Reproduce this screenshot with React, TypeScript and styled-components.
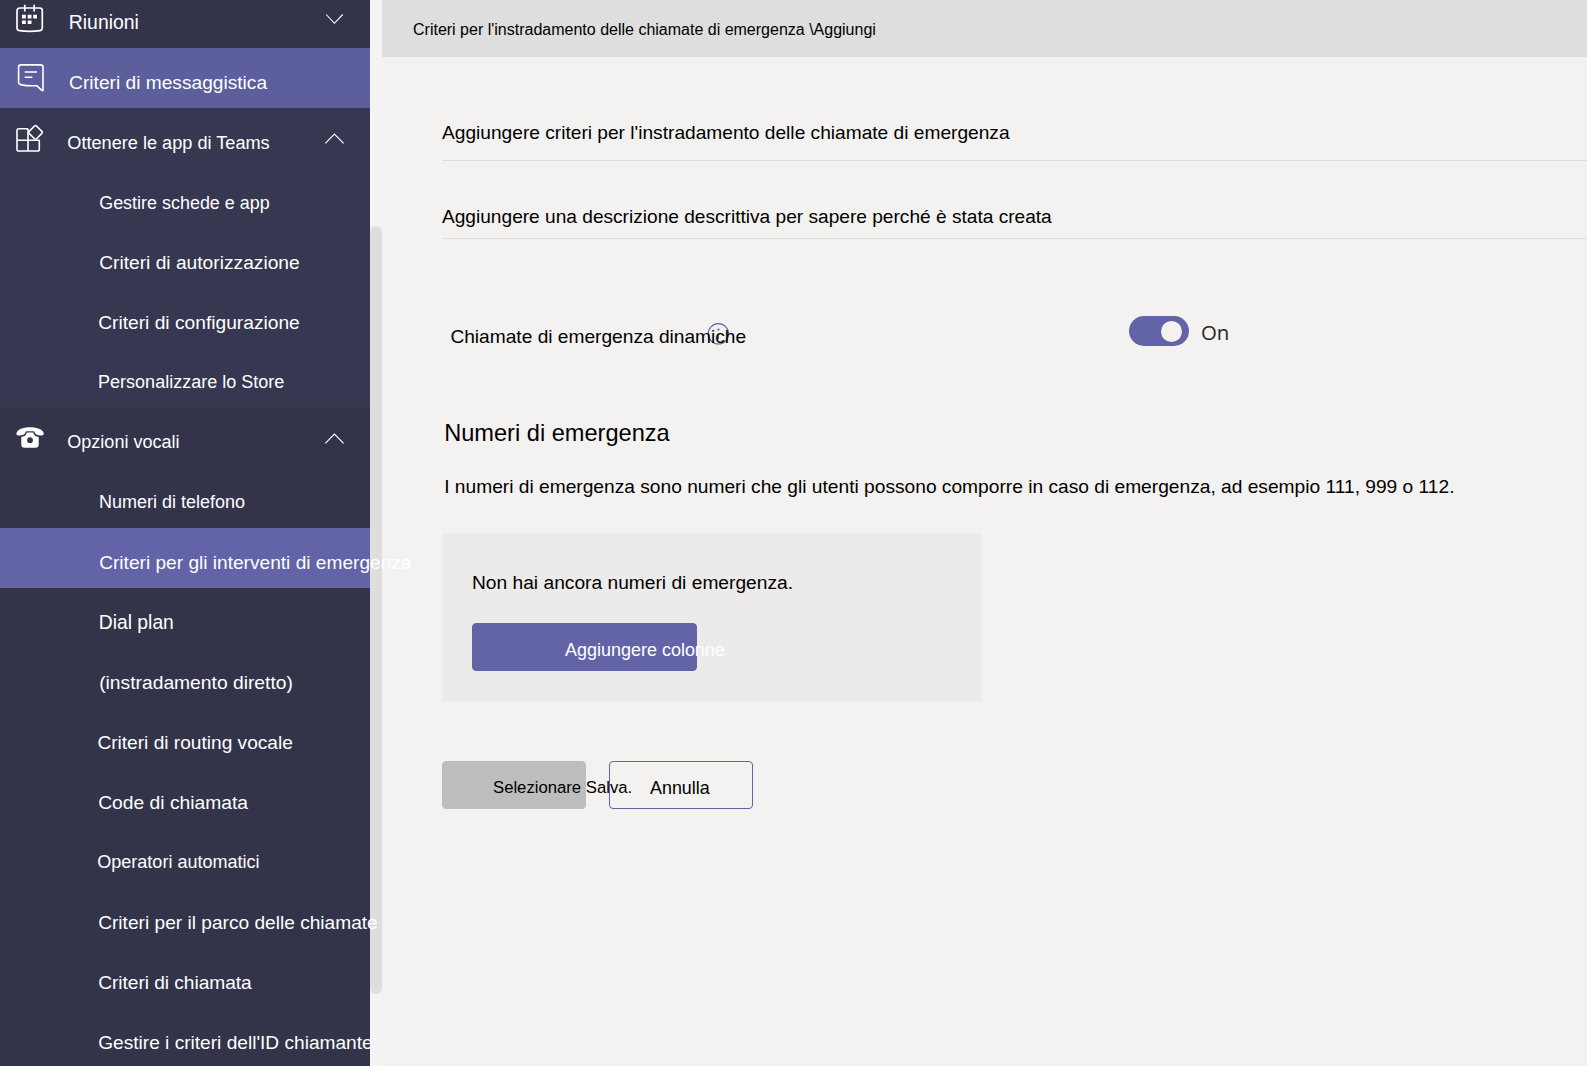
import React from "react";
import styled, { createGlobalStyle } from "styled-components";

const GlobalStyle = createGlobalStyle`
  * { box-sizing: border-box; }
  html, body { margin: 0; height: 100%; overflow: hidden; }
  body {
    background: #f3f2f0;
    font-family: "Liberation Sans", Arial, sans-serif;
    color: #000;
  }
`;

const Page = styled.div`
  display: flex;
  height: 1066px;
  overflow: hidden;
`;

const Label = styled.span<{ $size: number; $tracking?: number }>`
  display: block;
  flex: none;
  white-space: nowrap;
  font-size: ${(p) => p.$size}px;
  line-height: ${(p) => Math.round(p.$size * 0.905) + Math.round(p.$size * 0.212)}px;
  letter-spacing: ${(p) => p.$tracking ?? 0}px;
`;

/* ---- sidebar ---- */

const Sidebar = styled.nav`
  position: relative;
  z-index: 1;
  flex: none;
  width: 370px;
  margin-top: -12px;
  color: #fff;
`;

const tones = {
  base: "#33344a",
  group: "#363751",
  hover: "#5d5e9c",
  selected: "#6264a7",
};

const NavRow = styled.div<{ $tone: keyof typeof tones }>`
  display: flex;
  align-items: flex-start;
  height: 60px;
  background: ${(p) => tones[p.$tone]};
`;

const IconSlot = styled.div`
  flex: none;
  width: 60px;
  height: 60px;
  svg { display: block; }
`;

const NavText = styled.div<{ $indent: number; $base: number; $size: number }>`
  flex: 1;
  min-width: 0;
  padding-left: ${(p) => p.$indent}px;
  padding-top: ${(p) => p.$base - Math.round(p.$size * 0.905)}px;
`;

const ChevronSlot = styled.div`
  flex: none;
  width: 20px;
  margin: 23px 26px 0 0;
  svg { display: block; }
`;

const ScrollTrack = styled.div`
  flex: none;
  width: 12px;
  padding-top: 226px;
  background: #f4f4f4;
`;

const ScrollThumb = styled.div`
  height: 768px;
  border-radius: 6px;
  background: #dedede;
`;

/* ---- main area ---- */

const Main = styled.main`
  flex: 1;
  min-width: 0;
`;

const TopBar = styled.header`
  height: 57px;
  padding: 21px 0 0 31px;
  background: #dedede;
`;

const Form = styled.div`
  padding-left: 60px;
`;

const Field = styled.div<{ $height: number; $pad: number }>`
  height: ${(p) => p.$height}px;
  padding-top: ${(p) => p.$pad}px;
  border-bottom: 1px solid #dedede;
`;

const SettingRow = styled.div`
  display: flex;
  align-items: flex-start;
  height: 181px;
  padding-top: 77px;
`;

const SettingName = styled.div`
  position: relative;
  isolation: isolate;
  width: 687px;
  padding: 10px 0 0 8.4px;
`;

const InfoMark = styled.svg`
  position: absolute;
  z-index: -1;
  left: 265px;
  top: 6px;
`;

const Toggle = styled.div`
  display: flex;
  justify-content: flex-end;
  align-items: center;
  width: 60px;
  height: 30px;
  padding-right: 7px;
  border-radius: 15px;
  background: #6264a7;
`;

const Knob = styled.div`
  width: 21px;
  height: 21px;
  border-radius: 50%;
  background: #f3f2f1;
`;

const ToggleState = styled.span`
  margin: 1px 0 0 12px;
  font: 20.4px/30px "Open Sans", "Noto Sans", sans-serif;
  color: #252424;
`;

const Section = styled.section`
  padding-left: 2.2px;
  height: 113px;
`;

const Paragraph = styled.div`
  padding-top: 30px;
`;

const EmptyPanel = styled.div`
  width: 540px;
  height: 168px;
  padding: 39px 30px 30px;
  background: #ecebe9;
`;

const Actions = styled.div`
  display: flex;
  gap: 23px;
  margin-top: 60px;
`;

const Button = styled.button<{ $kind: "primary" | "disabled" | "outline"; $inset: number }>`
  display: flex;
  align-items: flex-start;
  flex: none;
  width: ${(p) => (p.$kind === "primary" ? 225 : 144)}px;
  height: 48px;
  margin: ${(p) => (p.$kind === "primary" ? "30px 0 0" : "0")};
  padding: 16px 0 0 ${(p) => p.$inset - 1}px;
  border: 1px solid ${(p) => (p.$kind === "disabled" ? "#bdbdbd" : "#6264a7")};
  border-radius: 4px;
  background: ${(p) => ({ primary: "#6264a7", disabled: "#bdbdbd", outline: "transparent" })[p.$kind]};
  color: ${(p) => (p.$kind === "primary" ? "#fff" : "#000")};
  font-family: inherit;
  text-align: left;
`;

/* ---- icons ---- */

const CalendarIcon = () => (
  <svg width="60" height="60" viewBox="0 -12 60 60" fill="none" stroke="#fff" strokeWidth="1.7">
    <path d="M20 8H39.8Q42.3 8 42.3 10.5V28Q42.3 30.2 40 30.6Q29.6 32.2 19.3 30.6Q17 30.2 17 28V11Q17 8 20 8Z" />
    <path d="M24.8 4.8V11.6M34.2 4.8V11.6" />
    <path
      d="M22 14.8h3.8v3.6H22zM27.7 14.8h3.8v3.6h-3.8zM33.2 14.8h3.8v3.6h-3.8zM22 20.4h3.8v3.6H22zM27.7 20.4h3.8v3.6h-3.8z"
      fill="#fff"
      stroke="none"
    />
  </svg>
);

const MessageIcon = () => (
  <svg width="60" height="60" viewBox="0 48 60 60" fill="none" stroke="#fff" strokeWidth="1.6" strokeLinejoin="round">
    <path d="M20.8 64.9H40.6Q43 64.9 43 67.2V90.6L41.8 90.3L36.7 85.7Q27.5 86.2 20.4 84.6Q18.6 84.2 18.6 82.2V67.2Q18.6 64.9 20.8 64.9Z" />
    <path d="M24.7 72H37M24.7 77.2H32.4" />
  </svg>
);

const AppsIcon = () => (
  <svg width="60" height="60" viewBox="0 108 60 60" fill="none" stroke="#fff" strokeWidth="1.6" strokeLinejoin="round">
    <path d="M28 128.8H18.8Q17 128.8 17 130.6V149.2Q17 151 18.8 151H37.6Q39.3 151 39.3 149.2V140.2H17M28 128.8V151" />
    <rect x="30.3" y="127.2" width="10.4" height="10.4" rx="1.4" transform="rotate(45 35.5 132.4)" />
  </svg>
);

const PhoneIcon = () => (
  <svg width="60" height="60" viewBox="0 408 60 60" fill="#fff">
    <path d="M16.4 433.8C16.8 429.6 22.8 427.3 30 427.3S43.4 429.6 43.8 433.8C43.8 435.2 42.6 435.6 41 435.5C37.6 435.3 35.3 434.6 34.6 432.2Q34.4 431.2 33.4 431.2H26.6Q25.7 431.2 25.5 432.2C24.8 434.6 22.5 435.3 19.2 435.5C17.5 435.6 16.3 435.2 16.4 433.8Z" />
    <path
      fillRule="evenodd"
      d="M27.3 432.6H32.7Q33.5 432.6 33.7 433.4C34.3 435.5 35.7 436.5 38.7 437V444.5Q38.7 447.8 35.5 447.8H24.5Q21.3 447.8 21.3 444.5V437C24.3 436.5 25.7 435.5 26.3 433.4Q26.5 432.6 27.3 432.6ZM30 437.3A2.9 2.9 0 1 0 30 443.1A2.9 2.9 0 1 0 30 437.3Z"
    />
  </svg>
);

const Chevron = ({ open }: { open: boolean }) => (
  <svg width="20" height="14" viewBox="0 0 20 14" fill="none" stroke="#fff" strokeWidth="1.1">
    <path d={open ? "M1.3 12.3L10.4 3L19.6 12.3" : "M2.2 3.5L10.4 12.3L18.7 3.5"} />
  </svg>
);

interface NavItem {
  text: string;
  tone: keyof typeof tones;
  size: number;
  indent: number;
  base?: number;
  tracking?: number;
  icon?: React.ReactNode;
  open?: boolean;
}

const navItems: NavItem[] = [
  { text: "Riunioni", tone: "base", size: 19.4, indent: 68.8, icon: <CalendarIcon />, open: false },
  { text: "Criteri di messaggistica", tone: "hover", size: 19.17, indent: 69.1, icon: <MessageIcon /> },
  { text: "Ottenere le app di Teams", tone: "group", size: 18.15, indent: 67.3, icon: <AppsIcon />, open: true },
  { text: "Gestire schede e app", tone: "group", size: 17.95, indent: 99.2 },
  { text: "Criteri di autorizzazione", tone: "group", size: 19.2, indent: 99.2 },
  { text: "Criteri di configurazione", tone: "group", size: 19.2, indent: 98.2 },
  { text: "Personalizzare lo Store", tone: "group", size: 18, indent: 98.1, base: 40 },
  { text: "Opzioni vocali", tone: "base", size: 18.04, indent: 67.3, base: 40, icon: <PhoneIcon />, open: true },
  { text: "Numeri di telefono", tone: "base", size: 18, indent: 99, base: 40 },
  { text: "Criteri per gli interventi di emergenza", tone: "selected", size: 19.12, indent: 99.2 },
  { text: "Dial plan", tone: "base", size: 19.3, indent: 98.8 },
  { text: "(instradamento diretto)", tone: "base", size: 19.25, indent: 99.2 },
  { text: "Criteri di routing vocale", tone: "base", size: 19.13, indent: 97.4 },
  { text: "Code di chiamata", tone: "base", size: 19.25, indent: 98.2 },
  { text: "Operatori automatici", tone: "base", size: 18.03, indent: 97.3, base: 40 },
  { text: "Criteri per il parco delle chiamate", tone: "base", size: 19.14, indent: 98.2 },
  { text: "Criteri di chiamata", tone: "base", size: 19.15, indent: 98.2, tracking: -0.04 },
  { text: "Gestire i criteri dell'ID chiamante", tone: "base", size: 19.12, indent: 98.2 },
];

export default function App() {
  return (
    <>
      <GlobalStyle />
      <Page>
        <Sidebar>
          {navItems.map((item) => (
            <NavRow key={item.text} $tone={item.tone}>
              {item.icon && <IconSlot>{item.icon}</IconSlot>}
              <NavText
                $indent={item.icon ? item.indent - 60 : item.indent}
                $base={item.base ?? 41}
                $size={item.size}
              >
                <Label $size={item.size} $tracking={item.tracking}>{item.text}</Label>
              </NavText>
              {item.open !== undefined && (
                <ChevronSlot>
                  <Chevron open={item.open} />
                </ChevronSlot>
              )}
            </NavRow>
          ))}
        </Sidebar>
        <ScrollTrack>
          <ScrollThumb />
        </ScrollTrack>
        <Main>
          <TopBar>
            <Label $size={16}>{"Criteri per l'instradamento delle chiamate di emergenza \\Aggiungi"}</Label>
          </TopBar>
          <Form>
            <Field $height={104} $pad={65}>
              <Label $size={19.15}>Aggiungere criteri per l'instradamento delle chiamate di emergenza</Label>
            </Field>
            <Field $height={78} $pad={45}>
              <Label $size={19.13}>Aggiungere una descrizione descrittiva per sapere perché è stata creata</Label>
            </Field>
            <SettingRow>
              <SettingName>
                <InfoMark width="24" height="24" viewBox="0 0 24 24" fill="none" stroke="#6264a7" strokeWidth="1.1">
                  <circle cx="11.4" cy="11.8" r="10.2" />
                  <path d="M11.4 13V17" />
                  <circle cx="11.4" cy="7.6" r="1.1" fill="#6264a7" stroke="none" />
                </InfoMark>
                <Label $size={19.15}>Chiamate di emergenza dinamiche</Label>
              </SettingName>
              <Toggle>
                <Knob />
              </Toggle>
              <ToggleState>On</ToggleState>
            </SettingRow>
            <Section>
              <Label $size={23.6}>Numeri di emergenza</Label>
              <Paragraph>
                <Label $size={19.18}>
                  I numeri di emergenza sono numeri che gli utenti possono comporre in caso di emergenza, ad esempio 111, 999 o 112.
                </Label>
              </Paragraph>
            </Section>
            <EmptyPanel>
              <Label $size={19.2}>Non hai ancora numeri di emergenza.</Label>
              <Button $kind="primary" $inset={93}>
                <Label $size={17.98}>Aggiungere colonne</Label>
              </Button>
            </EmptyPanel>
            <Actions>
              <Button $kind="disabled" $inset={51}>
                <Label $size={16.7}>Selezionare Salva.</Label>
              </Button>
              <Button $kind="outline" $inset={41}>
                <Label $size={17.9}>Annulla</Label>
              </Button>
            </Actions>
          </Form>
        </Main>
      </Page>
    </>
  );
}
